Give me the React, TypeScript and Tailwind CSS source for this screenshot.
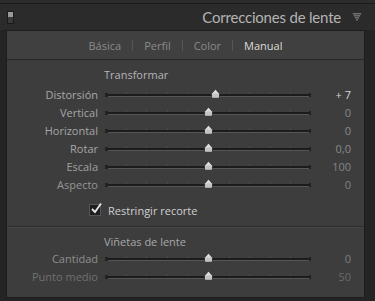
import React from 'react'

type Row = { label: string; value: string; pos: number; labelTone: string; valueTone: string }

const transform: Row[] = [
  { label: 'Distorsión', value: '+ 7', pos: 0.535, labelTone: 'text-[#aaaaaa]', valueTone: 'text-[#d6d6d6]' },
  { label: 'Vertical', value: '0', pos: 0.5, labelTone: 'text-[#a6a6a6]', valueTone: 'text-[#8a8a8a]' },
  { label: 'Horizontal', value: '0', pos: 0.5, labelTone: 'text-[#a6a6a6]', valueTone: 'text-[#8a8a8a]' },
  { label: 'Rotar', value: '0,0', pos: 0.5, labelTone: 'text-[#a6a6a6]', valueTone: 'text-[#8a8a8a]' },
  { label: 'Escala', value: '100', pos: 0.5, labelTone: 'text-[#a0a0a0]', valueTone: 'text-[#858585]' },
  { label: 'Aspecto', value: '0', pos: 0.5, labelTone: 'text-[#959595]', valueTone: 'text-[#828282]' },
]

const vignette: Row[] = [
  { label: 'Cantidad', value: '0', pos: 0.5, labelTone: 'text-[#8e8e8e]', valueTone: 'text-[#7e7e7e]' },
  { label: 'Punto medio', value: '50', pos: 0.5, labelTone: 'text-[#707070]', valueTone: 'text-[#6a6a6a]' },
]

const ticks = [0.1, 0.2, 0.3, 0.4, 0.6, 0.7, 0.8, 0.9]

function Thumb({ pos }: { pos: number }) {
  return (
    <svg
      className="absolute top-[0px]"
      style={{ left: `calc(${pos * 100}% - 5px)` }}
      width="11"
      height="11"
      viewBox="0 0 11 11"
    >
      <path d="M5.5 1 L9.5 5.5 L9.5 9 Q9.5 10.3 8.3 10.3 L2.7 10.3 Q1.5 10.3 1.5 9 L1.5 5.5 Z" fill="#c4c4c4" stroke="#2a2a2a" strokeWidth="0.8" />
      <path d="M5.5 2 L8.3 5.5 L2.7 5.5 Z" fill="#dcdcdc" />
    </svg>
  )
}

function SliderRow({ row }: { row: Row }) {
  return (
    <div className="flex h-[18px] items-center">
      <div className={`w-[91px] text-right ${row.labelTone}`}>{row.label}</div>
      <div className="relative ml-[7px] h-[12px] w-[206px]">
        <div className="absolute left-0 top-[6px] h-[2px] w-full bg-[#1c1c1c]" />
        <div className="absolute left-0 top-[8px] h-[1px] w-full bg-[#565656]" />
        <div className="absolute left-0 top-[5px] h-[4px] w-[3px] bg-[#222]" />
        <div className="absolute right-0 top-[5px] h-[4px] w-[2px] bg-[#222]" />
        {ticks.map((t) => (
          <div key={t} className="absolute top-[4px] h-[2px] w-[1px] bg-[#4a4a4a]" style={{ left: `${t * 100}%` }} />
        ))}
        <Thumb pos={row.pos} />
      </div>
      <div className={`ml-auto w-[40px] pr-[13px] text-right ${row.valueTone}`}>{row.value}</div>
    </div>
  )
}

export default function App() {
  return (
    <div
      className="flex h-[301px] w-[375px] flex-col overflow-hidden bg-[#242424] text-[11px] leading-none"
      style={{ fontFamily: '"Open Sans", "Liberation Sans", sans-serif' }}
    >
      <div className="h-[4px] border-b border-[#1a1a1a] bg-[#2c2c2c]" />
      <div className="flex h-[26px] items-center bg-[#2b2b2b]">
        <div className="ml-[7px] flex h-[13px] w-[7px] flex-col border border-[#1a1a1a]">
          <div className="h-1/2 bg-[#9a9a9a]" />
          <div className="h-1/2 bg-[#3a3a3a]" />
        </div>
        <div className="ml-auto font-['Lato'] text-[15px] tracking-[-0.2px] text-[#b4b4b4]">Correcciones de lente</div>
        <svg className="ml-[11px] mr-[13px]" width="10" height="10" viewBox="0 0 10 10">
          <path d="M0.5 1 L9.5 1 L5 9.5 Z" fill="#6e6e6e" />
          <path d="M2 2.5 L8 2.5 M3 4.5 L7 4.5 M4 6.5 L6 6.5" stroke="#4a4a4a" strokeWidth="1" />
        </svg>
      </div>
      <div className="mb-[3px] ml-[6px] mr-[10px] flex flex-1 flex-col border border-[#1d1d1d] bg-[#3d3d3d]">
        <div className="flex h-[29px] items-center justify-center border-b border-[#262626] bg-[#404040] text-[11px]">
          <span className="text-[#8a8a8a]">Básica</span>
          <span className="mx-[11px] h-[11px] w-[1px] bg-[#555]" />
          <span className="text-[#8a8a8a]">Perfil</span>
          <span className="mx-[11px] h-[11px] w-[1px] bg-[#555]" />
          <span className="text-[#8a8a8a]">Color</span>
          <span className="mx-[11px] h-[11px] w-[1px] bg-[#555]" />
          <span className="text-[#dcdcdc]">Manual</span>
        </div>
        <div className="pb-[10px] pt-[9px]">
          <div className="mb-[5px] pl-[97px] text-[#b4b4b4]">Transformar</div>
          {transform.map((r) => (
            <SliderRow key={r.label} row={r} />
          ))}
          <div className="mt-[11px] flex items-center pl-[82px]">
            <div className="relative h-[12px] w-[12px] border border-[#555] bg-[#1e1e1e]">
              <svg className="absolute -top-[3px] left-0" width="13" height="13" viewBox="0 0 13 13">
                <path d="M2 7 L5 10 L11 1.5" fill="none" stroke="#e6e6e6" strokeWidth="1.8" />
              </svg>
            </div>
            <span className="ml-[7px] text-[#cfcfcf]">Restringir recorte</span>
          </div>
        </div>
        <div className="h-[1px] bg-[#2e2e2e]" />
        <div className="h-[1px] bg-[#474747]" />
        <div className="pt-[8px]">
          <div className="mb-[2px] pl-[97px] text-[#a8a8a8]">Viñetas de lente</div>
          {vignette.map((r) => (
            <SliderRow key={r.label} row={r} />
          ))}
        </div>
      </div>
    </div>
  )
}
